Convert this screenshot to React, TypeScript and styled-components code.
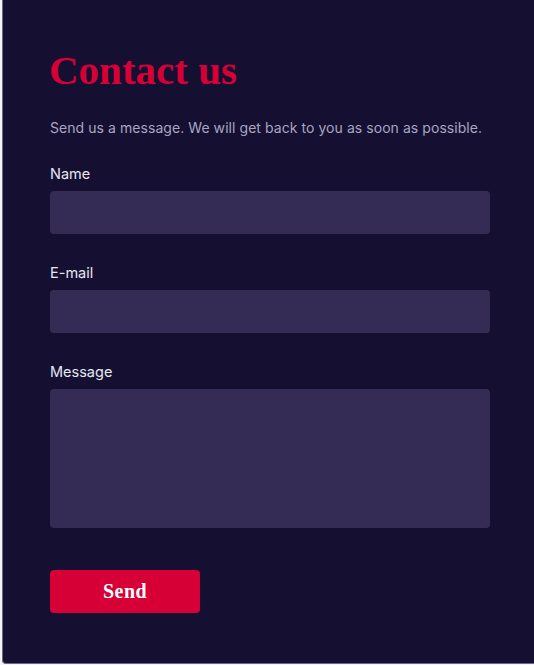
import React from "react";
import styled, { createGlobalStyle } from "styled-components";

const Global = createGlobalStyle`
  html, body { margin: 0; padding: 0; background: #f4f3f8; }
  body { font-family: Inter, "Noto Sans", sans-serif; }
  * { box-sizing: border-box; }
`;

const Page = styled.div`
  padding-left: 2px;
  height: 665px;
  overflow: hidden;
`;

const Card = styled.form`
  background: #151032;
  border: 1px solid #6b6880;
  border-top: none;
  border-right: none;
  border-radius: 0 0 0 4px;
  height: 664px;
  padding: 46px 44px 0 47px;
  display: flex;
  flex-direction: column;
`;

const Title = styled.h1`
  margin: 0 0 0 -1px;
  font-family: "Liberation Serif", "Times New Roman", serif;
  font-weight: 700;
  font-size: 41px;
  line-height: 48px;
  color: #d70036;
`;

const Lead = styled.p`
  margin: 24px 0 0;
  font-size: 14px;
  line-height: 20px;
  letter-spacing: 0.06px;
  white-space: nowrap;
  color: #a9a5c1;
`;

const Field = styled.label<{ $gap: number }>`
  display: flex;
  flex-direction: column;
  margin-top: ${(p) => p.$gap}px;
`;

const LabelText = styled.span`
  font-size: 14.5px;
  line-height: 20px;
  color: #e8e6f0;
  margin-bottom: 7px;
`;

const Input = styled.input`
  height: 43px;
  border: none;
  border-radius: 4px;
  background: #352c55;
  color: #fff;
  font: inherit;
  padding: 0 12px;
  outline: none;
`;

const TextArea = styled.textarea`
  height: 139px;
  border: none;
  border-radius: 4px;
  background: #352c55;
  color: #fff;
  font: inherit;
  padding: 10px 12px;
  resize: none;
  outline: none;
`;

const Button = styled.button`
  align-self: flex-start;
  margin-top: 42px;
  width: 150px;
  height: 43px;
  border: none;
  border-radius: 4px;
  background: #d70036;
  color: #fff;
  font-family: "Liberation Serif", "Times New Roman", serif;
  font-weight: 700;
  font-size: 20px;
  letter-spacing: 0.5px;
  cursor: pointer;
`;

export default function App() {
  return (
    <>
      <Global />
      <Page>
        <Card onSubmit={(e) => e.preventDefault()}>
          <Title>Contact us</Title>
          <Lead>Send us a message. We will get back to you as soon as possible.</Lead>
          <Field $gap={26}>
            <LabelText>Name</LabelText>
            <Input type="text" />
          </Field>
          <Field $gap={29}>
            <LabelText>E-mail</LabelText>
            <Input type="email" />
          </Field>
          <Field $gap={29}>
            <LabelText>Message</LabelText>
            <TextArea />
          </Field>
          <Button type="submit">Send</Button>
        </Card>
      </Page>
    </>
  );
}
